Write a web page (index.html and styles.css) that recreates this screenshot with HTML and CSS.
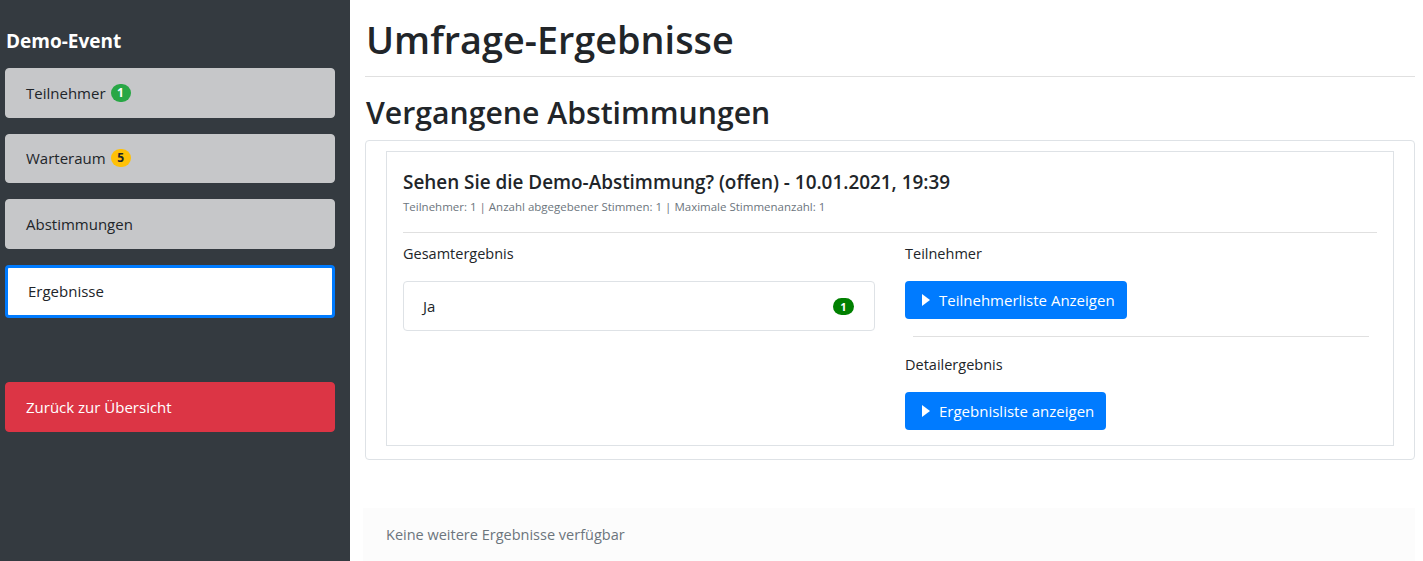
FILE: index.html
```html
<!DOCTYPE html>
<html lang="de">
<head>
<meta charset="utf-8">
<title>Umfrage-Ergebnisse</title>
<link rel="stylesheet" href="styles.css">
</head>
<body>
<div class="layout">
  <aside class="sidebar">
    <div class="event-title">Demo-Event</div>
    <nav class="nav">
      <a class="nav-btn">Teilnehmer <span class="pill pill-green">1</span></a>
      <a class="nav-btn">Warteraum <span class="pill pill-yellow">5</span></a>
      <a class="nav-btn">Abstimmungen</a>
      <a class="nav-btn active">Ergebnisse</a>
    </nav>
    <a class="nav-btn danger">Zurück zur Übersicht</a>
  </aside>
  <main class="main">
    <h1 class="page-title">Umfrage-Ergebnisse</h1>
    <hr class="rule">
    <h2 class="section-title">Vergangene Abstimmungen</h2>
    <div class="card-outer">
      <div class="card-inner">
        <h3 class="poll-title">Sehen Sie die Demo-Abstimmung? (offen) - 10.01.2021, 19:39</h3>
        <div class="poll-meta">Teilnehmer: 1 | Anzahl abgegebener Stimmen: 1 | Maximale Stimmenanzahl: 1</div>
        <hr class="rule inner-rule">
        <div class="cols">
          <div class="col">
            <div class="label">Gesamtergebnis</div>
            <div class="result-item">
              <span>Ja</span>
              <span class="pill pill-dkgreen">1</span>
            </div>
          </div>
          <div class="col">
            <div class="label">Teilnehmer</div>
            <button class="btn-blue"><svg width="8" height="12" viewBox="0 0 8 12"><path d="M0 0 L8 6 L0 12 Z" fill="#fff"/></svg>Teilnehmerliste Anzeigen</button>
            <hr class="rule col-rule">
            <div class="label">Detailergebnis</div>
            <button class="btn-blue"><svg width="8" height="12" viewBox="0 0 8 12"><path d="M0 0 L8 6 L0 12 Z" fill="#fff"/></svg>Ergebnisliste anzeigen</button>
          </div>
        </div>
      </div>
    </div>
    <div class="footer-note">Keine weitere Ergebnisse verfügbar</div>
  </main>
</div>
</body>
</html>
```
FILE: styles.css
```css
* { box-sizing: border-box; }
html, body { margin: 0; padding: 0; height: 100%; }
body {
  font-family: "Open Sans", "Noto Sans", "Liberation Sans", sans-serif;
  color: #212529;
  background: #fff;
  font-size: 16px;
}
.layout {
  display: flex;
  height: 561px;
  overflow: hidden;
}
.sidebar {
  width: 350px;
  flex: none;
  background: #343a40;
  padding: 29px 15px 0 5px;
  display: flex;
  flex-direction: column;
}
.event-title {
  color: #fff;
  font-weight: 700;
  font-size: 19px;
  line-height: 24px;
  padding-left: 1px;
  margin-bottom: 15px;
}
.nav {
  display: flex;
  flex-direction: column;
  gap: 16px;
  margin-bottom: 64px;
}
.nav-btn {
  display: flex;
  align-items: center;
  gap: 5px;
  height: 49.5px;
  padding: 0 20px;
  border: 1px solid #c6c7c9;
  border-radius: 4px;
  background: #c6c7c9;
  color: #212529;
  font-size: 15px;
}
.nav-btn.active {
  background: #fff;
  border: 3px solid #007bff;
  height: 53.5px;
  padding-left: 20px;
}
.nav-btn.danger {
  background: #dc3545;
  border-color: #dc3545;
  color: #fff;
}
.pill {
  display: inline-flex;
  align-items: center;
  justify-content: center;
  min-width: 20px;
  height: 18px;
  padding: 0 6px;
  border-radius: 10px;
  font-size: 12px;
  font-weight: 700;
  line-height: 1;
}
.pill-green { background: #28a745; color: #fff; }
.pill-yellow { background: #ffc107; color: #212529; }
.pill-dkgreen { background: #008000; color: #fff; }

.main {
  flex: 1;
  padding: 0 8px 0 15px;
  display: flex;
  flex-direction: column;
}
.page-title {
  margin: 16px 0 0 1px;
  font-size: 37.8px;
  font-weight: 600;
  line-height: 48px;
}
.rule {
  border: 0;
  border-top: 1px solid #e0e0e0;
  margin: 0;
}
.main > .rule { margin-top: 12px; }
.section-title {
  margin: 16px 0 0 1px;
  font-size: 30.2px;
  font-weight: 600;
  line-height: 40px;
}
.card-outer {
  margin-top: 7px;
  border: 1px solid #dee2e6;
  border-radius: 4px;
  padding: 10px 20px 13px 20px;
}
.card-inner {
  border: 1px solid #dee2e6;
  padding: 18px 16px 15px 16px;
}
.poll-title {
  margin: 0;
  font-size: 18.9px;
  font-weight: 600;
  line-height: 24px;
}
.poll-meta {
  margin-top: 5px;
  font-size: 11.5px;
  color: #6c757d;
  line-height: 16px;
}
.inner-rule { margin-top: 17px; }
.cols {
  display: flex;
  gap: 30px;
  margin-top: 10px;
}
.col { flex: 1; }
.label {
  font-size: 14.5px;
  line-height: 22px;
}
.result-item {
  margin-top: 16px;
  height: 50px;
  border: 1px solid #dee2e6;
  border-radius: 4px;
  display: flex;
  align-items: center;
  justify-content: space-between;
  padding: 0 20px 0 19px;
  font-size: 15px;
}
.result-item .pill { padding: 0 5px; min-width: 21px; height: 17px; font-size: 11px; }
.btn-blue {
  margin-top: 16px;
  display: inline-flex;
  align-items: center;
  gap: 9px;
  height: 38px;
  padding: 0 12px 0 17px;
  border: 0;
  border-radius: 4px;
  background: #007bff;
  color: #fff;
  font-family: inherit;
  font-size: 15px;
}
.col-rule { margin: 17px 8px 0 8px; }
.col-rule + .label { margin-top: 17px; }
.footer-note {
  margin-top: 48px;
  margin-left: -2px;
  height: 53px;
  background: #fcfcfc;
  display: flex;
  align-items: center;
  padding-left: 23px;
  color: #6c757d;
  font-size: 14.5px;
}
```
